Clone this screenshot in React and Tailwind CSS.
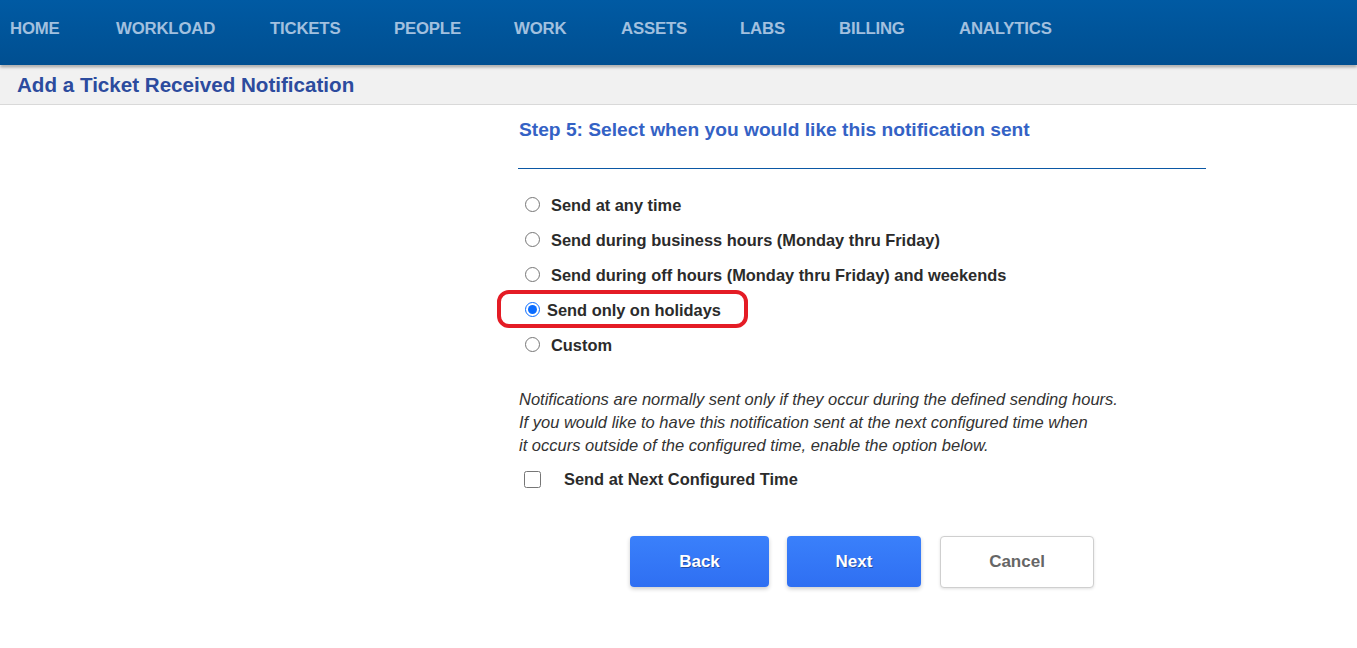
import React from "react";

const navItems = [
  { label: "HOME", w: "w-[106px]" },
  { label: "WORKLOAD", w: "w-[154px]" },
  { label: "TICKETS", w: "w-[124px]" },
  { label: "PEOPLE", w: "w-[120px]" },
  { label: "WORK", w: "w-[107px]" },
  { label: "ASSETS", w: "w-[119px]" },
  { label: "LABS", w: "w-[99px]" },
  { label: "BILLING", w: "w-[120px]" },
  { label: "ANALYTICS", w: "w-[120px]" },
];

const options = [
  "Send at any time",
  "Send during business hours (Monday thru Friday)",
  "Send during off hours (Monday thru Friday) and weekends",
  "Send only on holidays",
  "Custom",
];

export default function App() {
  return (
    <div className="min-h-[648px] bg-white font-['Liberation_Sans',Arial,sans-serif]">
      {/* Top nav */}
      <div className="h-[65px] bg-gradient-to-b from-[#005aa3] to-[#004f91] shadow-[0_2px_3px_rgba(0,0,0,0.35)] relative z-10">
        <div className="flex pl-[10px] pt-[19px]">
          {navItems.map((n) => (
            <div
              key={n.label}
              className={`${n.w} shrink-0 text-[16.8px] leading-[20px] font-bold text-[#a2c0df] tracking-[-0.2px]`}
            >
              {n.label}
            </div>
          ))}
        </div>
      </div>

      {/* Sub header */}
      <div className="h-[39px] mt-[1px] bg-[#f1f1f1] border-b border-[#d9d9d9] flex items-center pl-[17px]">
        <h1 className="text-[20.6px] font-bold text-[#2c4b9e] leading-[24px]">
          Add a Ticket Received Notification
        </h1>
      </div>

      {/* Main */}
      <div className="flex">
        <div className="w-[518px] shrink-0" />
        <div className="w-[688px]">
          <div className="pt-[14px] pb-[27px]">
            <h2 className="pl-[1px] text-[19.2px] leading-[22px] font-bold text-[#3462c5]">
              Step 5: Select when you would like this notification sent
            </h2>
          </div>
          <div className="h-px bg-[#0b58a5]" />

          <div className="mt-[18px] pl-[1px]">
            {options.map((o, i) => {
              const checked = i === 3;
              return (
                <div key={o} className="relative flex items-center h-[35px]">
                  {checked && (
                    <div className="absolute -left-[22px] -top-[2px] w-[251px] h-[38px] border-[4px] border-[#e41c25] rounded-[12px] pointer-events-none" />
                  )}
                  <input
                    type="radio"
                    name="when"
                    defaultChecked={checked}
                    className={`m-0 ml-[6px] w-[15px] h-[15px] accent-[#0a6cff] ${checked ? "mr-[7px]" : "mr-[11px]"}`}
                  />
                  <span className="text-[16.4px] font-bold text-[#2b2b2b] leading-[18px]">{o}</span>
                </div>
              );
            })}
          </div>

          <p className="mt-[26px] pl-[1px] text-[16.5px] italic leading-[23px] text-[#333333]">
            Notifications are normally sent only if they occur during the defined sending hours.
            <br />
            If you would like to have this notification sent at the next configured time when
            <br />
            it occurs outside of the configured time, enable the option below.
          </p>

          <div className="mt-[10px] flex items-center h-[24px] pl-[1px]">
            <input
              type="checkbox"
              className="m-0 ml-[5px] w-[17px] h-[17px] accent-[#0a6cff]"
            />
            <span className="ml-[23px] text-[16.4px] font-bold text-[#2b2b2b]">
              Send at Next Configured Time
            </span>
          </div>

          <div className="mt-[45px] ml-[112px] flex items-start">
            <button className="w-[139px] h-[51px] rounded-[4px] bg-gradient-to-b from-[#3a80fb] to-[#2f6ff2] text-white text-[17px] font-bold shadow-[0_2px_4px_rgba(0,0,0,0.2)] [text-shadow:1px_1px_0_rgba(0,0,0,0.35)]">
              Back
            </button>
            <button className="ml-[18px] w-[134px] h-[51px] rounded-[4px] bg-gradient-to-b from-[#3a80fb] to-[#2f6ff2] text-white text-[17px] font-bold shadow-[0_2px_4px_rgba(0,0,0,0.2)] [text-shadow:1px_1px_0_rgba(0,0,0,0.35)]">
              Next
            </button>
            <button className="ml-[19px] w-[154px] h-[52px] rounded-[4px] bg-white border border-[#cfcfcf] text-[#666666] text-[17px] font-bold shadow-[0_1px_3px_rgba(0,0,0,0.12)]">
              Cancel
            </button>
          </div>
        </div>
      </div>
    </div>
  );
}
